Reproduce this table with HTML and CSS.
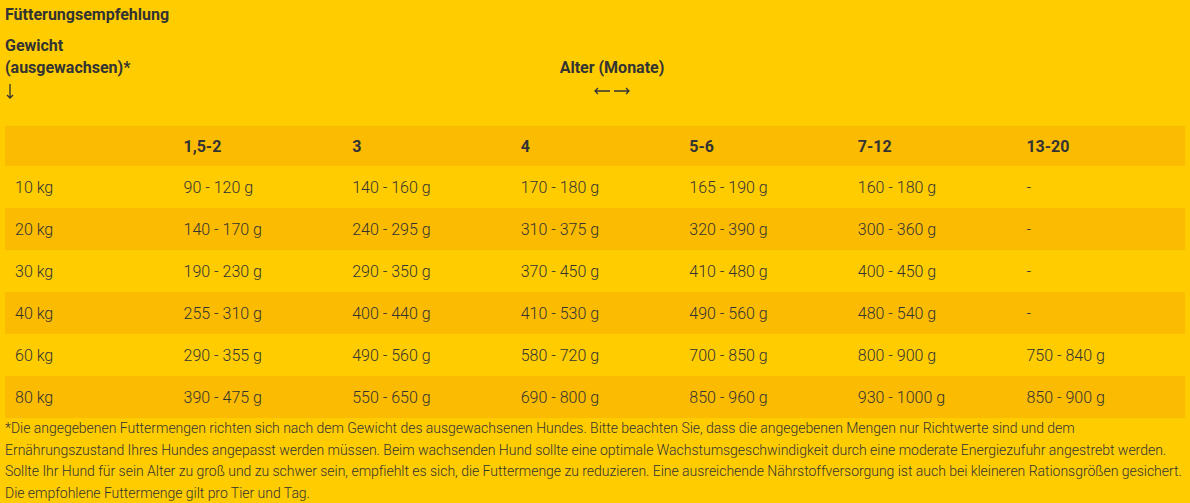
FILE: index.html
```html
<!DOCTYPE html>
<html lang="de">
<head>
<meta charset="utf-8">
<link rel="stylesheet" href="styles.css">
</head>
<body>
<h3 class="title">Fütterungsempfehlung</h3>
<div class="axes">
  <div class="axis-left">
    <div>Gewicht</div>
    <div>(ausgewachsen)*</div>
    <div class="arrow-line"><svg class="arr-v" width="8" height="16" viewBox="0 0 8 16" aria-label="↓"><path d="M4 1V15M1 12L4 15L7 12" fill="none" stroke="#333" stroke-width="1.3"/></svg></div>
  </div>
  <div class="axis-right">
    <div>Alter (Monate)</div>
    <div class="arrow-line"><svg class="arr-h" width="36" height="8" viewBox="0 0 36 8" aria-label="←→"><path d="M1 4H16M4 1L1 4L4 7M20 4H35M32 1L35 4L32 7" fill="none" stroke="#333" stroke-width="1.3"/></svg></div>
  </div>
</div>
<table class="feed">
  <thead>
    <tr><th></th><th>1,5-2</th><th>3</th><th>4</th><th>5-6</th><th>7-12</th><th>13-20</th></tr>
  </thead>
  <tbody>
    <tr><td>10 kg</td><td>90 - 120 g</td><td>140 - 160 g</td><td>170 - 180 g</td><td>165 - 190 g</td><td>160 - 180 g</td><td>-</td></tr>
    <tr><td>20 kg</td><td>140 - 170 g</td><td>240 - 295 g</td><td>310 - 375 g</td><td>320 - 390 g</td><td>300 - 360 g</td><td>-</td></tr>
    <tr><td>30 kg</td><td>190 - 230 g</td><td>290 - 350 g</td><td>370 - 450 g</td><td>410 - 480 g</td><td>400 - 450 g</td><td>-</td></tr>
    <tr><td>40 kg</td><td>255 - 310 g</td><td>400 - 440 g</td><td>410 - 530 g</td><td>490 - 560 g</td><td>480 - 540 g</td><td>-</td></tr>
    <tr><td>60 kg</td><td>290 - 355 g</td><td>490 - 560 g</td><td>580 - 720 g</td><td>700 - 850 g</td><td>800 - 900 g</td><td>750 - 840 g</td></tr>
    <tr><td>80 kg</td><td>390 - 475 g</td><td>550 - 650 g</td><td>690 - 800 g</td><td>850 - 960 g</td><td>930 - 1000 g</td><td>850 - 900 g</td></tr>
  </tbody>
</table>
<p class="note">*Die angegebenen Futtermengen richten sich nach dem Gewicht des ausgewachsenen Hundes. Bitte beachten Sie, dass die angegebenen Mengen nur Richtwerte sind und dem Ernährungszustand Ihres Hundes angepasst werden müssen. Beim wachsenden Hund sollte eine optimale Wachstumsgeschwindigkeit durch eine moderate Energiezufuhr angestrebt werden. Sollte Ihr Hund für sein Alter zu groß und zu schwer sein, empfiehlt es sich, die Futtermenge zu reduzieren. Eine ausreichende Nährstoffversorgung ist auch bei kleineren Rationsgrößen gesichert. Die empfohlene Futtermenge gilt pro Tier und Tag.</p>
</body>
</html>
```
FILE: styles.css
```css
html, body {
  margin: 0;
  padding: 0;
  background: #ffcc00;
}
body {
  padding: 0 5px;
  font-family: Roboto, "Liberation Sans", sans-serif;
  color: #333333;
  font-size: 16px;
}
.title {
  margin: 0;
  padding-top: 4px;
  font-size: 16px;
  font-weight: 700;
  line-height: 21px;
}
.axes {
  display: grid;
  grid-template-columns: 130px 1fr;
  align-items: end;
  margin-top: 10px;
  font-weight: 700;
  font-size: 16px;
  line-height: 22px;
}
.axis-right {
  text-align: center;
  padding-right: 96px;
}
.arrow-line {
  height: 24px;
  display: flex;
  align-items: center;
}
.axis-right .arrow-line {
  justify-content: center;
}
.arr-v {
  display: block;
  margin-left: 1px;
}
.arr-h {
  display: block;
}
.feed {
  width: 100%;
  margin-top: 23px;
  border-collapse: collapse;
  table-layout: fixed;
}
.feed th, .feed td {
  text-align: left;
  padding: 0 10px;
}
.feed th {
  height: 40px;
  font-weight: 700;
}
.feed td {
  height: 42px;
  font-weight: 300;
}
.feed thead tr, .feed tbody tr:nth-child(even) {
  background: #fbbb00;
}
.note {
  margin: 0;
  font-size: 14px;
  font-weight: 300;
  line-height: 21.5px;
  letter-spacing: -0.025px;
}
```
